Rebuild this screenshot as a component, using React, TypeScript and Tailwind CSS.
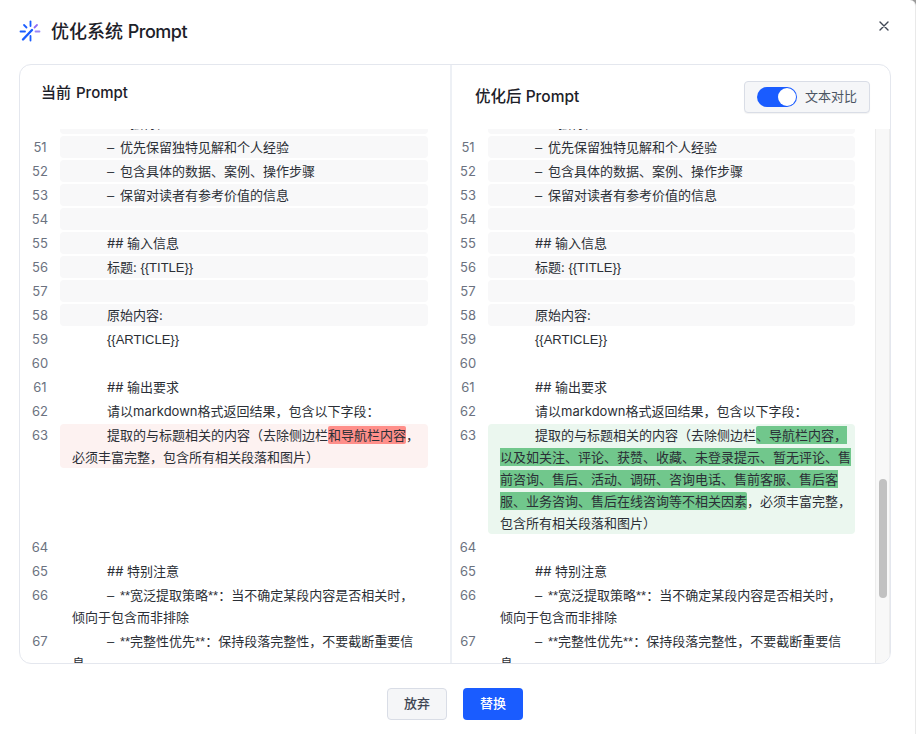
import React from "react";

type Part = { t: string; h?: boolean; arial?: boolean; dash?: boolean };
type Row = { n: number; parts?: Part[]; bg?: "gray" | "red" | "green" | "none"; h?: string };

const D: Part = { t: "–", dash: true };
const S: Part = { t: "**", arial: true };

const shared = (): Row[] => [
  { n: 50, parts: [D, { t: " " }, S, { t: "独特性" }, S, { t: ":" }], bg: "gray" },
  { n: 51, parts: [D, { t: " 优先保留独特见解和个人经验" }], bg: "gray" },
  { n: 52, parts: [D, { t: " 包含具体的数据、案例、操作步骤" }], bg: "gray" },
  { n: 53, parts: [D, { t: " 保留对读者有参考价值的信息" }], bg: "gray" },
  { n: 54, bg: "gray" },
  { n: 55, parts: [{ t: "## 输入信息" }], bg: "gray" },
  { n: 56, parts: [{ t: "标题: " }, { t: "{{TITLE}}", arial: true }], bg: "gray" },
  { n: 57, bg: "gray" },
  { n: 58, parts: [{ t: "原始内容:" }], bg: "gray" },
  { n: 59, parts: [{ t: "{{ARTICLE}}", arial: true }] },
  { n: 60 },
  { n: 61, parts: [{ t: "## 输出要求" }] },
  { n: 62, parts: [{ t: "请以markdown格式返回结果，包含以下字段：" }] },
];

const tail = (): Row[] => [
  { n: 64 },
  { n: 65, parts: [{ t: "## 特别注意" }] },
  { n: 66, parts: [D, { t: " " }, S, { t: "宽泛提取策略" }, S, { t: "：当不确定某段内容是否相关时，倾向于包含而非排除" }] },
  { n: 67, parts: [D, { t: " " }, S, { t: "完整性优先" }, S, { t: "：保持段落完整性，不要截断重要信息" }] },
];

const leftRows: Row[] = [
  ...shared(),
  {
    n: 63,
    bg: "red",
    h: "h-[110px]",
    parts: [
      { t: "提取的与标题相关的内容（去除侧边栏" },
      { t: "和导航栏内容", h: true },
      { t: "，必须丰富完整，包含所有相关段落和图片）" },
    ],
  },
  ...tail(),
];

const rightRows: Row[] = [
  ...shared(),
  {
    n: 63,
    bg: "green",
    parts: [
      { t: "提取的与标题相关的内容（去除侧边栏" },
      {
        t: "、导航栏内容，以及如关注、评论、获赞、收藏、未登录提示、暂无评论、售前咨询、售后、活动、调研、咨询电话、售前客服、售后客服、业务咨询、售后在线咨询等不相关因素",
        h: true,
      },
      { t: "，必须丰富完整，包含所有相关段落和图片）" },
    ],
  },
  ...tail(),
];

function CodeRow({ row, numClass, rowClass }: { row: Row; numClass: string; rowClass: string }) {
  const bg =
    row.bg === "gray"
      ? "bg-[#f8f8f9]"
      : row.bg === "red"
        ? "bg-[#fdf2f1]"
        : row.bg === "green"
          ? "bg-[#ebf7ef]"
          : "";
  return (
    <div className={`flex items-start shrink-0 ${row.h ?? ""}`}>
      <div className={`shrink-0 w-[28px] text-center text-[13px] leading-[22px] text-[#6b7280] ${numClass}`}>{row.n}</div>
      <div className={`shrink-0 min-h-[22px] rounded-[4px] pl-[12px] text-[13px] leading-[22px] text-[#2b2f36] indent-[35px] ${bg} ${rowClass}`}>
        {row.parts?.map((p, i) =>
          p.h ? (
            <span
              key={i}
              className={`py-px rounded-[2px] ${row.bg === "red" ? "bg-[#ff8f8a]" : "bg-[#71c78c]"}`}
            >
              {p.t}
            </span>
          ) : p.arial ? (
            <span key={i} className="leading-none font-['Liberation_Sans',sans-serif]">{p.t}</span>
          ) : p.dash ? (
            <span key={i} className="leading-none font-['Liberation_Sans',sans-serif] pr-[2px]">{p.t}</span>
          ) : (
            <span key={i}>{p.t}</span>
          ),
        )}
      </div>
    </div>
  );
}

function SparkIcon() {
  return (
    <svg width="22" height="22" viewBox="0 0 22 22" fill="none" strokeLinecap="round" className="shrink-0">
      <path d="M11.5 1.5V6" stroke="#1a5cff" strokeWidth="1.8" />
      <path d="M11.5 16V20.5" stroke="#1a5cff" strokeWidth="1.8" />
      <path d="M1.5 11.5H6" stroke="#1a5cff" strokeWidth="1.8" />
      <path d="M16.5 11.5H20.5" stroke="#9a86f7" strokeWidth="1.8" />
      <path d="M5 5L7.5 7.5" stroke="#1a5cff" strokeWidth="1.8" />
      <path d="M15.5 7.5L18 5" stroke="#8f6cf5" strokeWidth="1.8" />
      <path d="M4 19.5L13 10" stroke="#1a5cff" strokeWidth="2.4" />
    </svg>
  );
}

export default function App() {
  return (
    <div className="w-[916px] h-[734px] overflow-hidden bg-[#9a9a9a]">
      <div className="w-full h-full bg-white rounded-tr-[6px] border-r border-[#e9e9e9] flex flex-col font-['Inter','Noto_Sans_CJK_SC',sans-serif]">
        <div className="h-[64px] shrink-0 flex items-start pl-[19px] pr-[24px] pt-[20px]">
          <SparkIcon />
          <div className="ml-[10px] mt-[1px] text-[18px] leading-[22px] font-medium text-[#1d2129]">
            优化系统 <span className="tracking-[-0.5px]">Prompt</span>
          </div>
          <button className="ml-auto mt-[-1px] text-[#4b5563] w-[14px] h-[14px] flex items-center justify-center">
            <svg width="10" height="10" viewBox="0 0 10 10" fill="none" stroke="#3f4654" strokeWidth="1.4" strokeLinecap="round">
              <path d="M1 1L9 9M9 1L1 9" />
            </svg>
          </button>
        </div>

        <div className="ml-[19px] w-[872px] h-[600px] shrink-0 border border-[#e4e7ee] rounded-[12px] flex overflow-hidden">
          <div className="w-[432px] shrink-0 border-r-2 border-[#edf0f5] flex flex-col">
            <div className="h-[64px] shrink-0 pl-[21px] pt-[17px] text-[15px] leading-[22px] font-medium text-[#1d2129]">
              当前 <span className="ml-[1px]">Prompt</span>
            </div>
            <div className="flex-1 overflow-hidden">
              <div className="flex flex-col gap-[2px] mt-[-17px]">
                {leftRows.map((r) => (
                  <CodeRow key={r.n} row={r} numClass="ml-[6px] mr-[6px]" rowClass="w-[368px] pr-[6px]" />
                ))}
              </div>
            </div>
          </div>

          <div className="flex-1 flex flex-col min-w-0">
            <div className="h-[64px] shrink-0 flex items-center pl-[23px] pr-[20px]">
              <div className="text-[15.5px] leading-[22px] font-medium text-[#1d2129] mt-[-1px]">优化后 Prompt</div>
              <div className="ml-auto w-[126px] h-[32px] flex items-center pl-[12px] rounded-[4px] border border-[#d9dde6] bg-[#f5f6f8] shadow-[0_1px_1px_rgba(0,0,0,0.05)]">
                <div className="w-[40px] h-[20px] rounded-full bg-[#1a5cff] flex items-center justify-end pr-[1px] shrink-0">
                  <div className="w-[18px] h-[18px] rounded-full bg-white" />
                </div>
                <span className="ml-[8px] text-[13px] text-[#4b5563]">文本对比</span>
              </div>
            </div>
            <div className="flex-1 flex min-h-0">
              <div className="w-[423px] shrink-0 overflow-hidden">
                <div className="flex flex-col gap-[2px] mt-[-17px]">
                  {rightRows.map((r) => (
                    <CodeRow key={r.n} row={r} numClass="ml-[2px] mr-[6px]" rowClass="w-[367px] pr-[3px]" />
                  ))}
                </div>
              </div>
              <div className="flex-1 bg-[#f8f8f8] border-l border-r border-[#ececec] pt-[350px] pl-[3px]">
                <div className="w-[8px] h-[119px] rounded-[4px] bg-[#c1c1c1]" />
              </div>
            </div>
          </div>
        </div>

        <div className="flex justify-center gap-[16px] pt-[24px] pr-[5px]">
          <button className="w-[60px] h-[32px] rounded-[4px] border border-[#d9dde6] bg-[#f5f6f8] text-[13px] font-medium text-[#3f4654]">放弃</button>
          <button className="w-[60px] h-[32px] rounded-[4px] bg-[#1a5cff] text-[13px] font-medium text-white">替换</button>
        </div>
      </div>
    </div>
  );
}
